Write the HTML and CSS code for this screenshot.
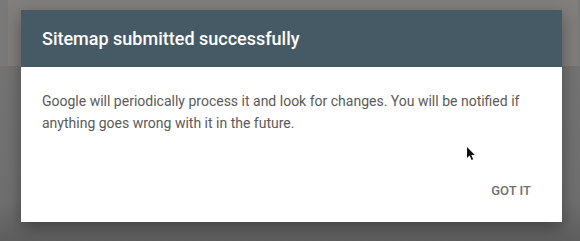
FILE: index.html
```html
<!DOCTYPE html>
<html lang="en">
<head>
	<meta charset="UTF-8">
	<title>Sitemap submitted</title>
	<link rel="stylesheet" href="styles.css">
</head>
<body>
<div class="page">
   <div class="bgcard"></div>
   <div class="dialog">
      <div class="dialog-head">Sitemap submitted successfully</div>
      <div class="dialog-body">
         Google will periodically process it and look for changes. You will be notified if
         anything goes wrong with it in the future.
      </div>
      <div class="dialog-actions">
         <span class="btn">GOT IT</span>
      </div>
   </div>
   <svg class="cursor" width="12" height="16" viewBox="0 0 12 16">
      <path d="M1 1 L1 12 L3.6 9.6 L5.6 14 L7.2 13.3 L5.3 9 L8.8 9 Z" fill="#111"/>
   </svg>
</div>
</body>
</html>
```

FILE: styles.css
```css
   html,body{
   	margin: 0;
   	background: #777676;
   }
   .page{
   	width: 580px;
   	height: 241px;
   	position: relative;
   	overflow: hidden;
   	background: linear-gradient(#7b7978 0, #7b7978 66px, #737373 66px, #6f6f6f 200px, #5e5e5e 241px);
   }
   .bgcard{
   	position: absolute;
   	left: 8px;
   	top: 0;
   	width: 570px;
   	height: 66px;
   	background: #817e7c;
   }
   .dialog{
   	position: absolute;
   	left: 21px;
   	top: 10px;
   	width: 541px;
   	height: 212px;
   	background: #fff;
   	box-shadow: 0 6px 16px rgba(0,0,0,0.35);
   	font-family: Roboto, "Liberation Sans", sans-serif;
   	display: flex;
   	flex-direction: column;
   }
   .dialog-head{
   	height: 57px;
   	background: #455a64;
   	color: #fff;
   	font-size: 18px;
   	font-weight: 500;
   	line-height: 57px;
   	padding-left: 21px;
   }
   .dialog-body{
   	padding: 23px 21px 0;
   	font-size: 14px;
   	line-height: 22px;
   	color: #5a5a5a;
   	flex: 1;
   }
   .dialog-actions{
   	display: flex;
   	justify-content: flex-end;
   	padding: 0 31px 24px 0;
   }
   .btn{
   	font-size: 13px;
   	font-weight: 500;
   	color: #707070;
   }
   .cursor{
   	position: absolute;
   	left: 466px;
   	top: 146px;
   }
```
